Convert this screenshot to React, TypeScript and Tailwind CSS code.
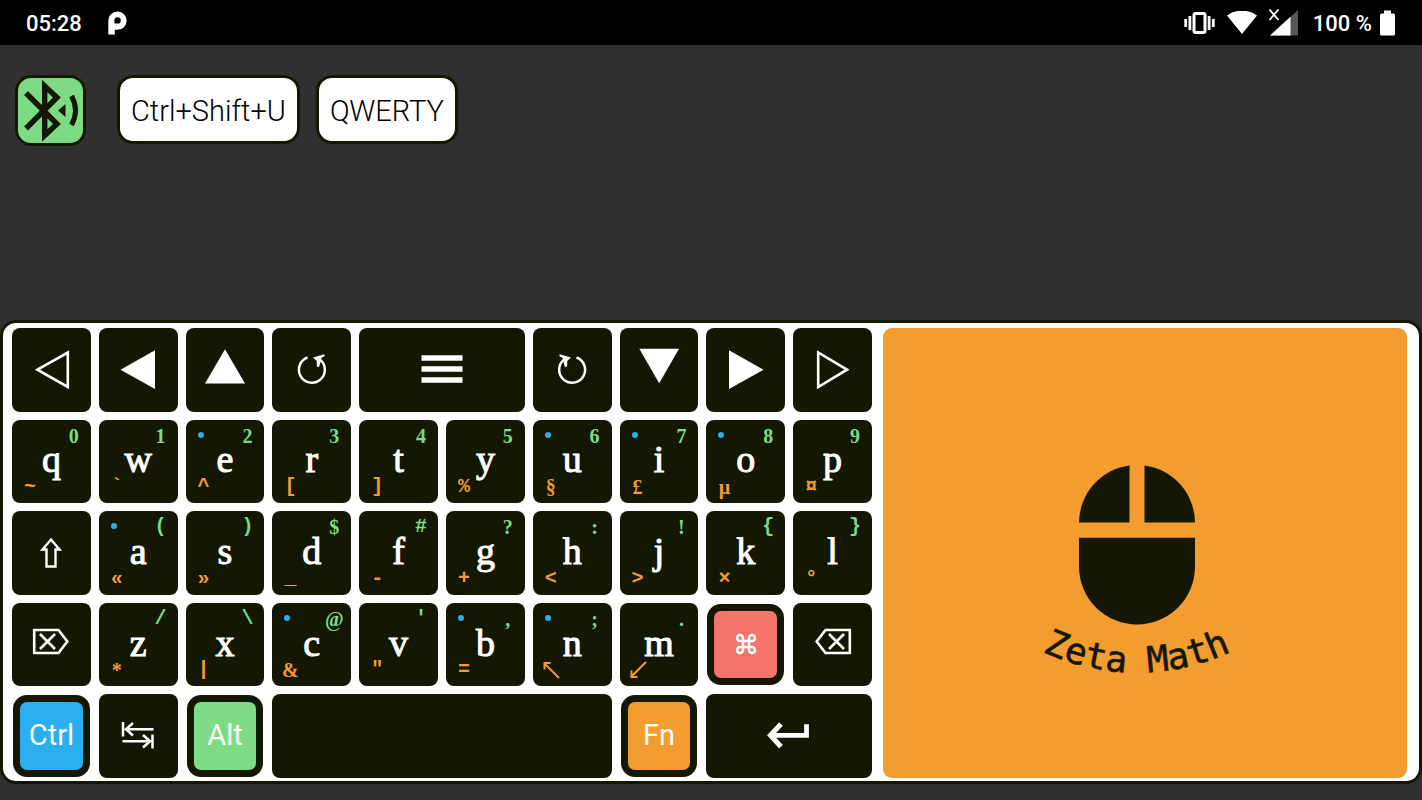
import React from 'react';
import clsx from 'clsx';
import { Command } from 'lucide-react';

type Legend = {
  main: string;
  top?: string;
  bottom?: string;
  dot?: boolean;
};

const ROW_ONE: Legend[] = [
  { main: 'q', top: '0', bottom: '~' },
  { main: 'w', top: '1', bottom: '`' },
  { main: 'e', top: '2', bottom: '^', dot: true },
  { main: 'r', top: '3', bottom: '[' },
  { main: 't', top: '4', bottom: ']' },
  { main: 'y', top: '5', bottom: '%' },
  { main: 'u', top: '6', bottom: '§', dot: true },
  { main: 'i', top: '7', bottom: '£', dot: true },
  { main: 'o', top: '8', bottom: 'µ', dot: true },
  { main: 'p', top: '9', bottom: '¤' },
];

const ROW_TWO: Legend[] = [
  { main: 'a', top: '(', bottom: '«', dot: true },
  { main: 's', top: ')', bottom: '»' },
  { main: 'd', top: '$', bottom: '_' },
  { main: 'f', top: '#', bottom: '-' },
  { main: 'g', top: '?', bottom: '+' },
  { main: 'h', top: ':', bottom: '<' },
  { main: 'j', top: '!', bottom: '>' },
  { main: 'k', top: '{', bottom: '×' },
  { main: 'l', top: '}', bottom: '°' },
];

const ROW_THREE: Legend[] = [
  { main: 'z', top: '/', bottom: '*' },
  { main: 'x', top: '\\', bottom: '|' },
  { main: 'c', top: '@', bottom: '&', dot: true },
  { main: 'v', top: "'", bottom: '"' },
  { main: 'b', top: ',', bottom: '=', dot: true },
  { main: 'n', top: ';', bottom: '↖', dot: true },
  { main: 'm', top: '.', bottom: '↙' },
];

// Digits and letter-like signs use the serif face, operators the mono one
const SERIF_SIGNS = /[\d$@&£§?!:;,.µ*]/;

function Sign({ value, className }: { value: string; className: string }) {
  const base = 'absolute flex w-6 h-5 items-center justify-center text-[20px] leading-5 font-bold';

  if (value === '↖' || value === '↙') {
    return (
      <span className={clsx(base, className)}>
        <svg viewBox="0 0 18 18" className="w-[18px] h-[18px] shrink-0" fill="none" stroke="currentColor" strokeWidth="2">
          {value === '↖' ? <path d="M17 17L2 2M2.5 8.5V2H8.5" /> : <path d="M17 1L2 16M2.5 9.5V16H8.5" />}
        </svg>
      </span>
    );
  }

  return (
    <span
      className={clsx(
        base,
        className,
        SERIF_SIGNS.test(value) ? "font-['Liberation_Serif',serif]" : "font-['Liberation_Mono',monospace]"
      )}
    >
      {value}
    </span>
  );
}

function LetterKey({ legend }: { legend: Legend }) {
  return (
    <button className="relative flex items-center justify-center rounded-lg bg-[#141803] pb-1 text-white">
      {legend.dot && <span className="absolute left-3 top-3 w-[6px] h-[6px] rounded-full bg-[#2aaef0]"></span>}
      {legend.top && <Sign value={legend.top} className="right-[5px] top-1.5 text-[#7ddb83]" />}
      <span className="text-[38px] leading-[38px] font-['Liberation_Serif',serif] [-webkit-text-stroke:1px]">
        {legend.main}
      </span>
      {legend.bottom && <Sign value={legend.bottom} className="left-1.5 bottom-1.5 text-[#f39c2f]" />}
    </button>
  );
}

function IconKey({ label, wide, children }: { label: string; wide?: boolean; children: React.ReactNode }) {
  return (
    <button
      aria-label={label}
      className={clsx('flex items-center justify-center rounded-lg bg-[#141803] text-white', wide && 'col-span-2')}
    >
      <svg viewBox="-24 -24 48 48" className="w-12 h-12" fill="none" stroke="currentColor">
        {children}
      </svg>
    </button>
  );
}

function ModifierKey({ className, children }: { className: string; children: React.ReactNode }) {
  return (
    <button
      className={clsx(
        'm-px flex items-center justify-center rounded-[14px] border-[7px] border-[#141803] pb-0.5 text-[29px] leading-8 text-white',
        className
      )}
    >
      {children}
    </button>
  );
}

function StatusBar() {
  return (
    <header className="flex h-[45px] items-center justify-between bg-black pl-[26px] pr-[27px] text-[22px] font-medium leading-6 text-white">
      <div className="flex items-center gap-[26px]">
        <span className="pt-0.5">05:28</span>
        <svg viewBox="0 0 19 24" className="w-[19px] h-6" fill="currentColor" fillRule="evenodd">
          <path d="M0.3 23.6V9.4A9.2 9.2 0 1 1 9.5 18.8H6.8V23.6ZM6.4 12.6H9.6A3.2 3.2 0 1 0 6.4 9.4Z" />
        </svg>
      </div>

      <div className="flex items-center">
        <svg viewBox="0 0 31 24" className="w-[31px] h-6" fill="currentColor">
          <rect x="10" y="2.5" width="11" height="19" rx="1.5" fill="none" stroke="currentColor" strokeWidth="3" />
          <rect x="4.5" y="5" width="2.8" height="14" />
          <rect x="0.3" y="8" width="2.8" height="8" />
          <rect x="23.7" y="5" width="2.8" height="14" />
          <rect x="27.9" y="8" width="2.8" height="8" />
        </svg>
        <svg viewBox="0 0 30 24" className="ml-3 w-[30px] h-6" fill="currentColor">
          <path d="M15 23L0 4.5C8.5 -2 21.5 -2 30 4.5Z" />
        </svg>
        <svg viewBox="0 0 29 28" className="ml-3 w-[29px] h-7">
          <path d="M1 26.5L29 1V26.5Z" fill="#555555" />
          <path d="M1 26.5L21.5 7.8V26.5Z" fill="#ffffff" />
          <path d="M0.5 0.5L9.5 11M9.5 0.5L0.5 11" stroke="#ffffff" strokeWidth="1.8" />
        </svg>
        <span className="ml-[15px] pt-0.5">100 %</span>
        <svg viewBox="0 0 15 26" className="ml-2 w-[15px] h-[26px]" fill="currentColor">
          <path d="M4 0.5H11V3.5H13.5Q15 3.5 15 5V24Q15 25.5 13.5 25.5H1.5Q0 25.5 0 24V5Q0 3.5 1.5 3.5H4Z" />
        </svg>
      </div>
    </header>
  );
}

function Toolbar() {
  return (
    <div className="flex items-start px-[15px] pt-[30px] text-[29px] font-light leading-8 text-black">
      <button
        aria-label="Bluetooth"
        className="flex w-[71px] h-[71px] items-center justify-center rounded-2xl border-[3px] border-[#141803] bg-[#7ddb83] text-[#141803]"
      >
        <svg viewBox="0 0 65 65" className="w-[65px] h-[65px] shrink-0" fill="none" stroke="currentColor" strokeWidth="5.4">
          <path d="M8 15L39 46L26.7 57.5V8L39 19.5L8 50.5" />
          <path d="M53.5 18Q61.5 32.5 53.5 47" strokeWidth="5" />
          <path d="M40 32.5L47.5 26V39Z" fill="currentColor" stroke="none" />
        </svg>
      </button>
      <button className="ml-[31px] h-[69px] rounded-2xl border-[3px] border-[#141803] bg-white px-[11px] pt-0.5">
        Ctrl+Shift+U
      </button>
      <button className="ml-4 h-[69px] rounded-2xl border-[3px] border-[#141803] bg-white px-[11px] pt-0.5">
        QWERTY
      </button>
    </div>
  );
}

function Trackpad() {
  return (
    <div className="flex flex-[524] items-center justify-center rounded-[9px] bg-[#f39c2f] text-[#141803]">
      <svg viewBox="0 0 240 240" className="w-60 h-60 overflow-visible" fill="currentColor">
        <path d="M104.5 32.5V89.5H54A58 58 0 0 1 104.5 32.5Z" />
        <path d="M119.5 32.5V89.5H170A58 58 0 0 0 119.5 32.5Z" />
        <path d="M54 104.7H170V133.5A58 58 0 0 1 54 133.5Z" />
        <path id="label-arc" d="M1 209.8A222 222 0 0 0 223 209.8" fill="none" />
        <text
          className="text-[36px] font-['DejaVu_Sans_Mono',monospace]"
          stroke="currentColor"
          strokeWidth="0.6"
          textAnchor="middle"
        >
          <textPath href="#label-arc" startOffset="50%">Zeta Math</textPath>
        </text>
      </svg>
    </div>
  );
}

function Keyboard() {
  return (
    <div className="grid h-[450px] flex-[860] grid-cols-10 grid-rows-5 gap-2">
      {/* Navigation */}
      <IconKey label="Back">
        <path d="M-13.5 -0.3L16.8 -17.5V17Z" strokeWidth="2.6" />
      </IconKey>
      <IconKey label="Left">
        <path d="M-17.5 -0.3L17 -19.7V19Z" fill="currentColor" stroke="none" />
      </IconKey>
      <IconKey label="Up">
        <path d="M0 -20.7L20 13.5H-20Z" fill="currentColor" stroke="none" />
      </IconKey>
      <IconKey label="Undo">
        <path d="M-4.5 -12.5A13 13 0 1 0 9.5 -9" strokeWidth="2.5" />
        <path d="M1 -12.5L12.5 -15.8V-13.8L9 -12L10.5 -9L8.5 -8L7 -3L4.8 -3.5L4.8 -9Z" fill="currentColor" stroke="none" />
      </IconKey>
      <IconKey label="Menu" wide>
        <path d="M-20.5 -12H20.5M-20.5 -1H20.5M-20.5 10H20.5" strokeWidth="5.4" />
      </IconKey>
      <IconKey label="Redo">
        <path d="M4.5 -12.5A13 13 0 1 1 -9.5 -9" strokeWidth="2.5" />
        <path d="M-1 -12.5L-12.5 -15.8V-13.8L-9 -12L-10.5 -9L-8.5 -8L-7 -3L-4.8 -3.5L-4.8 -9Z" fill="currentColor" stroke="none" />
      </IconKey>
      <IconKey label="Down">
        <path d="M-19.7 -21.3H20L0.2 13.2Z" fill="currentColor" stroke="none" />
      </IconKey>
      <IconKey label="Right">
        <path d="M17.5 -0.3L-17 -19.7V19Z" fill="currentColor" stroke="none" />
      </IconKey>
      <IconKey label="Forward">
        <path d="M14 -0.3L-14.8 -17.5V17Z" strokeWidth="2.6" />
      </IconKey>

      {ROW_ONE.map((legend) => (
        <LetterKey key={legend.main} legend={legend} />
      ))}

      <IconKey label="Shift">
        <path d="M0 -13.5L8.5 -3.5H4.5V13.5H-4.5V-3.5H-8.5Z" strokeWidth="2.4" />
      </IconKey>
      {ROW_TWO.map((legend) => (
        <LetterKey key={legend.main} legend={legend} />
      ))}

      <IconKey label="Delete">
        <path d="M-16.8 -15H7.5L16.3 -3.5L7.5 8H-16.8Z" strokeWidth="2.6" />
        <path d="M-11 -11L4 4M4 -11L-11 4" strokeWidth="2.6" />
      </IconKey>
      {ROW_THREE.map((legend) => (
        <LetterKey key={legend.main} legend={legend} />
      ))}
      <ModifierKey className="bg-[#f5756c]">
        <Command aria-label="Command" className="w-6 h-6" strokeWidth={2.5} />
      </ModifierKey>
      <IconKey label="Backspace">
        <path d="M16.8 -15H-7.5L-16.3 -3.5L-7.5 8H16.8Z" strokeWidth="2.6" />
        <path d="M11 -11L-4 4M-4 -11L11 4" strokeWidth="2.6" />
      </IconKey>

      {/* Modifiers */}
      <ModifierKey className="bg-[#2aaef0]">Ctrl</ModifierKey>
      <IconKey label="Tab">
        <path d="M-15 -14V0.5M-13 -6.7H15.5M-5 -13L-12 -6.7L-5 -0.5" strokeWidth="2.5" />
        <path d="M14.5 -1.5V12.5M13 5.3H-15.5M5 -1L12 5.3L5 11.5" strokeWidth="2.5" />
      </IconKey>
      <ModifierKey className="bg-[#7ddb83]">Alt</ModifierKey>
      <button aria-label="Space" className="col-span-4 rounded-lg bg-[#141803]"></button>
      <ModifierKey className="bg-[#f39c2f]">Fn</ModifierKey>
      <IconKey label="Enter" wide>
        <path d="M-18 -0.7H17.5V-11.7" strokeWidth="4.8" />
        <path d="M-8 -12L-18.5 -0.7L-8 10.7" strokeWidth="5" />
      </IconKey>
    </div>
  );
}

export default function App() {
  return (
    <div className="flex min-h-screen flex-col bg-[#303030] font-[Roboto,sans-serif]">
      <StatusBar />
      <Toolbar />
      <main className="mt-auto mb-4 flex gap-[11px] rounded-2xl border-[3px] border-[#141803] bg-white pl-[9px] pr-3 pt-[5px] pb-[3px]">
        <Keyboard />
        <Trackpad />
      </main>
    </div>
  );
}
